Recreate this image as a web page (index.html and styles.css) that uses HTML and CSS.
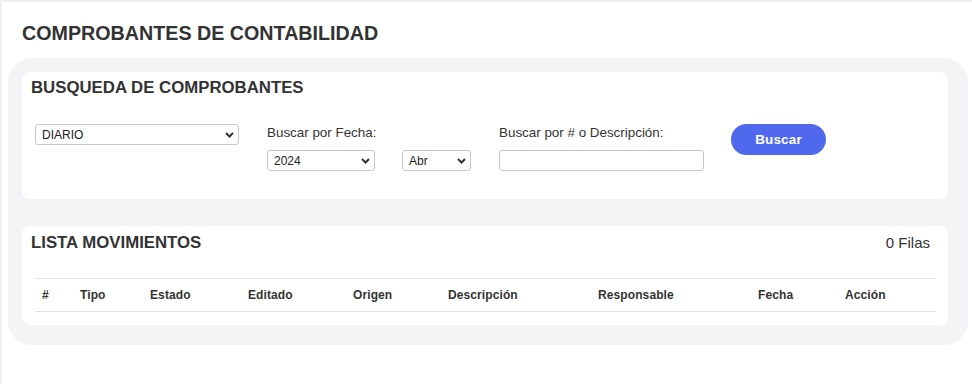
FILE: index.html
```html
<!DOCTYPE html>
<html lang="es">
<head>
    <meta charset="UTF-8">
    <title>Comprobantes de contabilidad</title>
    <link rel="stylesheet" href="styles.css">
</head>
<body>
<div class="page">
    <h1 class="page-title">COMPROBANTES DE CONTABILIDAD</h1>

    <div class="wrap">
        <div class="card card-search">
            <h2 class="card-title">BUSQUEDA DE COMPROBANTES</h2>
            <div class="search-row">
                <div class="field field-type">
                    <select class="sel sel-type">
                        <option>DIARIO</option>
                    </select>
                </div>
                <div class="field">
                    <label class="lbl">Buscar por Fecha:</label>
                    <div class="date-row">
                        <select class="sel sel-year">
                            <option>2024</option>
                        </select>
                        <select class="sel sel-month">
                            <option>Abr</option>
                        </select>
                    </div>
                </div>
                <div class="field">
                    <label class="lbl">Buscar por # o Descripción:</label>
                    <input class="txt" type="text">
                </div>
                <button class="btn-search">Buscar</button>
            </div>
        </div>

        <div class="card card-list">
            <div class="list-head">
                <h2 class="card-title">LISTA MOVIMIENTOS</h2>
                <span class="rows">0 Filas</span>
            </div>
            <table class="grid">
                <colgroup>
                    <col style="width:38px">
                    <col style="width:70px">
                    <col style="width:98px">
                    <col style="width:105px">
                    <col style="width:95px">
                    <col style="width:150px">
                    <col style="width:160px">
                    <col style="width:87px">
                    <col style="width:98px">
                </colgroup>
                <thead>
                <tr>
                    <th>#</th>
                    <th>Tipo</th>
                    <th>Estado</th>
                    <th>Editado</th>
                    <th>Origen</th>
                    <th>Descripción</th>
                    <th>Responsable</th>
                    <th>Fecha</th>
                    <th>Acción</th>
                </tr>
                </thead>
                <tbody></tbody>
            </table>
        </div>
    </div>
</div>
</body>
</html>
```

FILE: styles.css
```css
*{
    box-sizing: border-box;
}
html, body{
    margin: 0;
    padding: 0;
    background: #fff;
}
body{
    font-family: "Liberation Sans", Arial, sans-serif;
    color: #333;
}
.page{
    height: 384px;
    padding: 0 4px 0 8px;
    border-top: 2px solid #f0f0f2;
    border-left: 2px solid #f0f0f2;
}
.page-title{
    margin: 0;
    padding: 19px 0 0 12px;
    height: 56px;
    font-size: 19.7px;
    line-height: 24px;
    font-weight: bold;
}
.wrap{
    width: 960px;
    margin-left: -2px;
    background: #f4f4f6;
    border-radius: 24px;
    padding: 14px 20px 20px 14px;
}
.card{
    background: #fff;
    border-radius: 8px;
}
.card-title{
    margin: 0;
    font-size: 16.8px;
    line-height: 20px;
    font-weight: bold;
}
/*busqueda*/
.card-search{
    padding: 6px 12px 28px 9px;
}
.search-row{
    display: flex;
    align-items: flex-start;
    margin-top: 26px;
    padding-left: 4px;
}
.field{
    display: flex;
    flex-direction: column;
    margin-right: 28px;
}
.lbl{
    font-size: 13.4px;
    line-height: 16px;
    margin: 1px 0 9px;
}
.sel{
    -webkit-appearance: none;
    appearance: none;
    height: 21px;
    border: 1px solid #c8c8c8;
    border-radius: 3px;
    background: #fff url("data:image/svg+xml;utf8,<svg xmlns='http://www.w3.org/2000/svg' width='9' height='6' viewBox='0 0 9 6'><path d='M1 1l3.5 3.5L8 1' fill='none' stroke='%23333' stroke-width='2'/></svg>") no-repeat right 4px center;
    font-family: "Liberation Sans", Arial, sans-serif;
    font-size: 12px;
    color: #222;
    padding: 0 0 0 6px;
    margin: 0;
}
.sel-type{
    width: 204px;
}
.date-row{
    display: flex;
}
.sel-year{
    width: 108px;
    margin-right: 27px;
}
.sel-month{
    width: 69px;
}
.txt{
    width: 205px;
    height: 21px;
    border: 1px solid #c8c8c8;
    border-radius: 3px;
    margin: 0;
}
.btn-search{
    width: 95px;
    height: 31px;
    margin-left: -1px;
    border: 0;
    border-radius: 16px;
    background: #5068ee;
    color: #fff;
    font-family: "Liberation Sans", Arial, sans-serif;
    font-size: 13.4px;
    font-weight: bold;
    letter-spacing: 0.2px;
}
/*lista*/
.card-list{
    margin-top: 27px;
    padding: 7px 12px 13px 13px;
}
.list-head{
    display: flex;
    justify-content: space-between;
    align-items: center;
    margin-left: -4px;
    padding-right: 6px;
}
.rows{
    font-size: 15px;
    line-height: 20px;
}
.grid{
    width: 901px;
    margin-top: 25px;
    border-collapse: collapse;
    table-layout: fixed;
}
.grid th{
    text-align: left;
    font-size: 12px;
    font-weight: bold;
    letter-spacing: 0.1px;
    height: 33px;
    padding: 0 0 0 7px;
    border-top: 1px solid #e2e2e4;
    border-bottom: 1px solid #e2e2e4;
}
```
